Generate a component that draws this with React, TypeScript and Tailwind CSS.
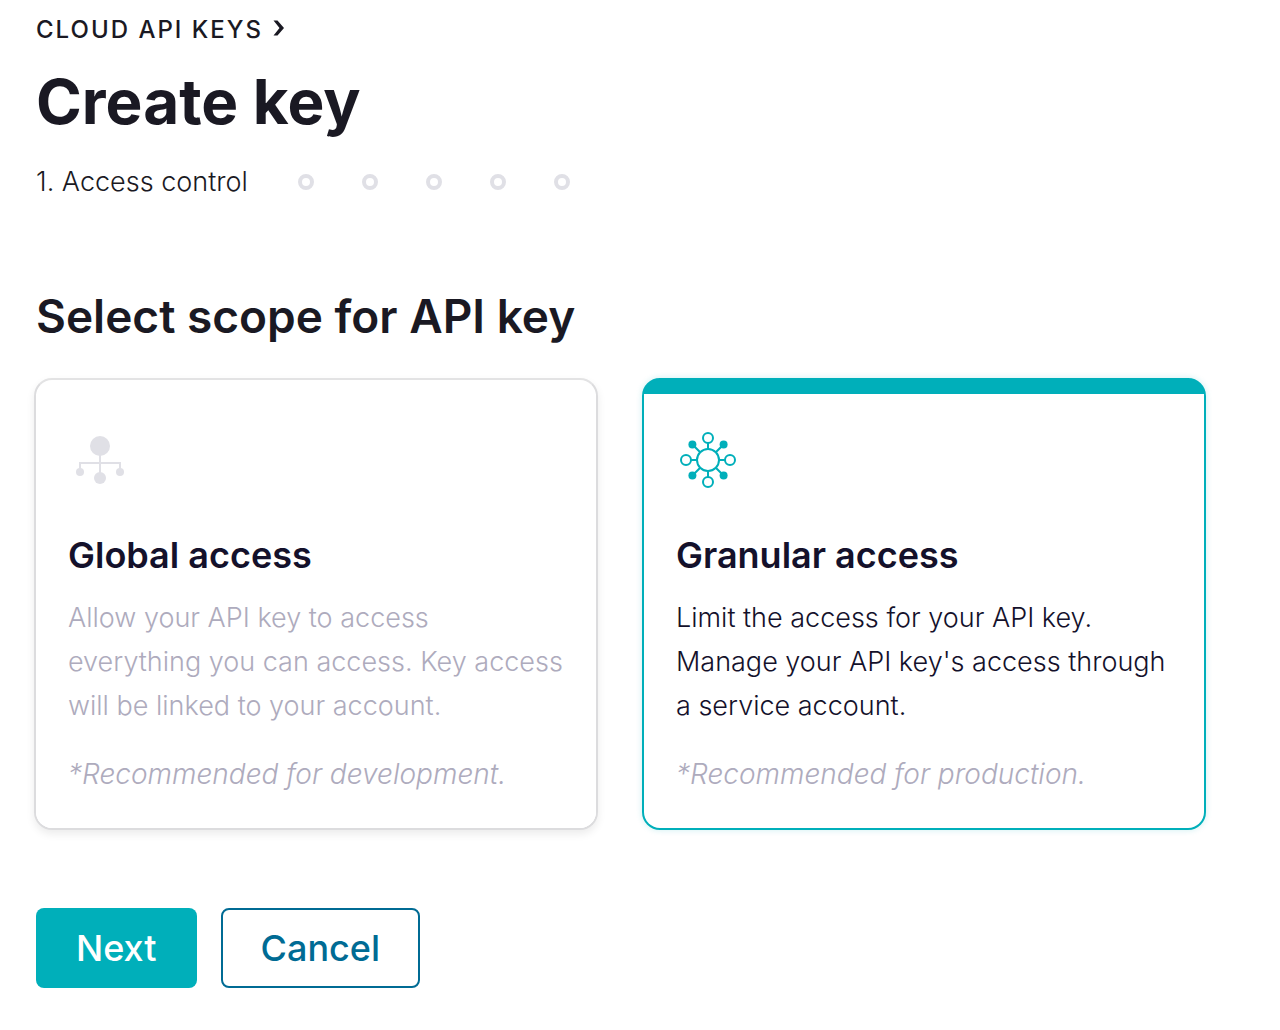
import { useState } from 'react';

type Scope = 'global' | 'granular';

const upcomingSteps = [2, 3, 4, 5, 6];

export default function App() {
  const [scope, setScope] = useState<Scope>('granular');

  return (
    <main className="min-h-screen bg-white pt-[14px] pr-[76px] pb-10 pl-9 font-['Inter',sans-serif] text-[#1a1923]">
      {/* Breadcrumb */}
      <nav aria-label="Breadcrumb">
        <a href="#" className="inline-flex h-8 items-center gap-[10px] text-2xl font-medium tracking-[2px] uppercase">
          Cloud API keys
          <ChevronIcon className="mb-1 h-4 w-3" />
        </a>
      </nav>

      <h1 className="mt-4 text-[62px] leading-[80px] font-bold">Create key</h1>

      {/* Progress */}
      <div className="mt-[18px] flex items-center gap-[50px]">
        <span className="text-[27px] leading-[44px] font-light">1. Access control</span>
        <ol className="flex gap-12">
          {upcomingSteps.map((step) => (
            <li key={step} aria-label={`Step ${step}`} className="size-4 rounded-full border-4 border-[#e0e0e6]" />
          ))}
        </ol>
      </div>

      <form onSubmit={(e) => e.preventDefault()}>
        <h2 className="mt-[84px] text-[46px] leading-[56px] font-semibold">Select scope for API key</h2>

        <div className="-mx-0.5 mt-[34px] grid grid-cols-2 gap-11">
          <ScopeCard
            value="global"
            selected={scope === 'global'}
            onSelect={setScope}
            icon={<GlobalIcon />}
            title="Global access"
            description="Allow your API key to access everything you can access. Key access will be linked to your account."
            note="*Recommended for development."
          />
          <ScopeCard
            value="granular"
            selected={scope === 'granular'}
            onSelect={setScope}
            icon={<GranularIcon />}
            title="Granular access"
            description="Limit the access for your API key. Manage your API key's access through a service account."
            note="*Recommended for production."
          />
        </div>

        <div className="mt-[78px] flex gap-6">
          <button
            type="submit"
            className="h-20 rounded-lg bg-[#00afba] px-10 text-4xl font-medium text-white hover:bg-[#009aa4]"
          >
            Next
          </button>
          <button
            type="button"
            className="h-20 rounded-lg border-2 border-[#006b94] px-[38px] text-4xl font-medium text-[#006b94] hover:bg-sky-50"
          >
            Cancel
          </button>
        </div>
      </form>
    </main>
  );
}

interface ScopeCardProps {
  value: Scope;
  selected: boolean;
  onSelect: (value: Scope) => void;
  icon: React.ReactNode;
  title: string;
  description: string;
  note: string;
}

function ScopeCard({ value, selected, onSelect, icon, title, description, note }: ScopeCardProps) {
  return (
    <label
      className={`relative block cursor-pointer rounded-[18px] border-2 pt-[14px] ${
        selected
          ? 'border-[#00afba] bg-[#00afba] shadow-[0_0_6px_rgba(0,175,186,0.2)]'
          : 'border-[#dcdcde] border-t-[#e3e3e4] bg-white shadow-[0_4px_8px_rgba(0,0,0,0.08)]'
      }`}
    >
      <input
        type="radio"
        name="scope"
        value={value}
        checked={selected}
        onChange={() => onSelect(value)}
        className="sr-only"
      />
      <div className="rounded-b-2xl bg-white pt-[34px] pr-7 pb-8 pl-8">
        <span className={`block size-16 ${selected ? 'text-[#00afba]' : 'text-[#e0e0e6]'}`}>{icon}</span>
        <h3 className="mt-10 text-4xl leading-[46px] font-semibold text-[#14112b]">{title}</h3>
        <p
          className={`mt-[18px] text-[27px] leading-[44px] font-light ${selected ? 'text-[#14112b]' : 'text-[#aeabbd]'}`}
        >
          {description}
        </p>
        <p className="mt-6 text-[28px] leading-[44px] font-light text-[#aeabbd] italic">{note}</p>
      </div>
    </label>
  );
}

// Icons
function ChevronIcon({ className }: { className?: string }) {
  return (
    <svg className={className} viewBox="0 0 12 16" fill="currentColor">
      <path d="M0.5 0.5h4l6.5 7.5-6.5 7.5h-4L6.5 8z" />
    </svg>
  );
}

function GlobalIcon() {
  return (
    <svg className="size-16" viewBox="0 0 64 64" fill="currentColor">
      <path d="M12 44V35H52V44M32 18V50" fill="none" stroke="currentColor" strokeWidth={2} />
      <circle cx="32" cy="18" r="10" />
      <circle cx="32" cy="50" r="6" />
      <circle cx="12" cy="44" r="4" />
      <circle cx="52" cy="44" r="4" />
    </svg>
  );
}

function GranularIcon() {
  return (
    <svg className="size-16" viewBox="0 0 64 64" fill="none" stroke="currentColor" strokeWidth={2}>
      <circle cx="32" cy="32" r="11" />
      <circle cx="32" cy="10" r="5" />
      <circle cx="32" cy="54" r="5" />
      <circle cx="10" cy="32" r="5" />
      <circle cx="54" cy="32" r="5" />
      <path d="M32 15v6M32 43v6M15 32h6M43 32h6M24.2 24.2l-8-8M39.8 24.2l8-8M24.2 39.8l-8 8M39.8 39.8l8 8" />
      <g fill="currentColor" stroke="none">
        <circle cx="16.4" cy="16.4" r="4" />
        <circle cx="47.6" cy="16.4" r="4" />
        <circle cx="16.4" cy="47.6" r="4" />
        <circle cx="47.6" cy="47.6" r="4" />
      </g>
    </svg>
  );
}
